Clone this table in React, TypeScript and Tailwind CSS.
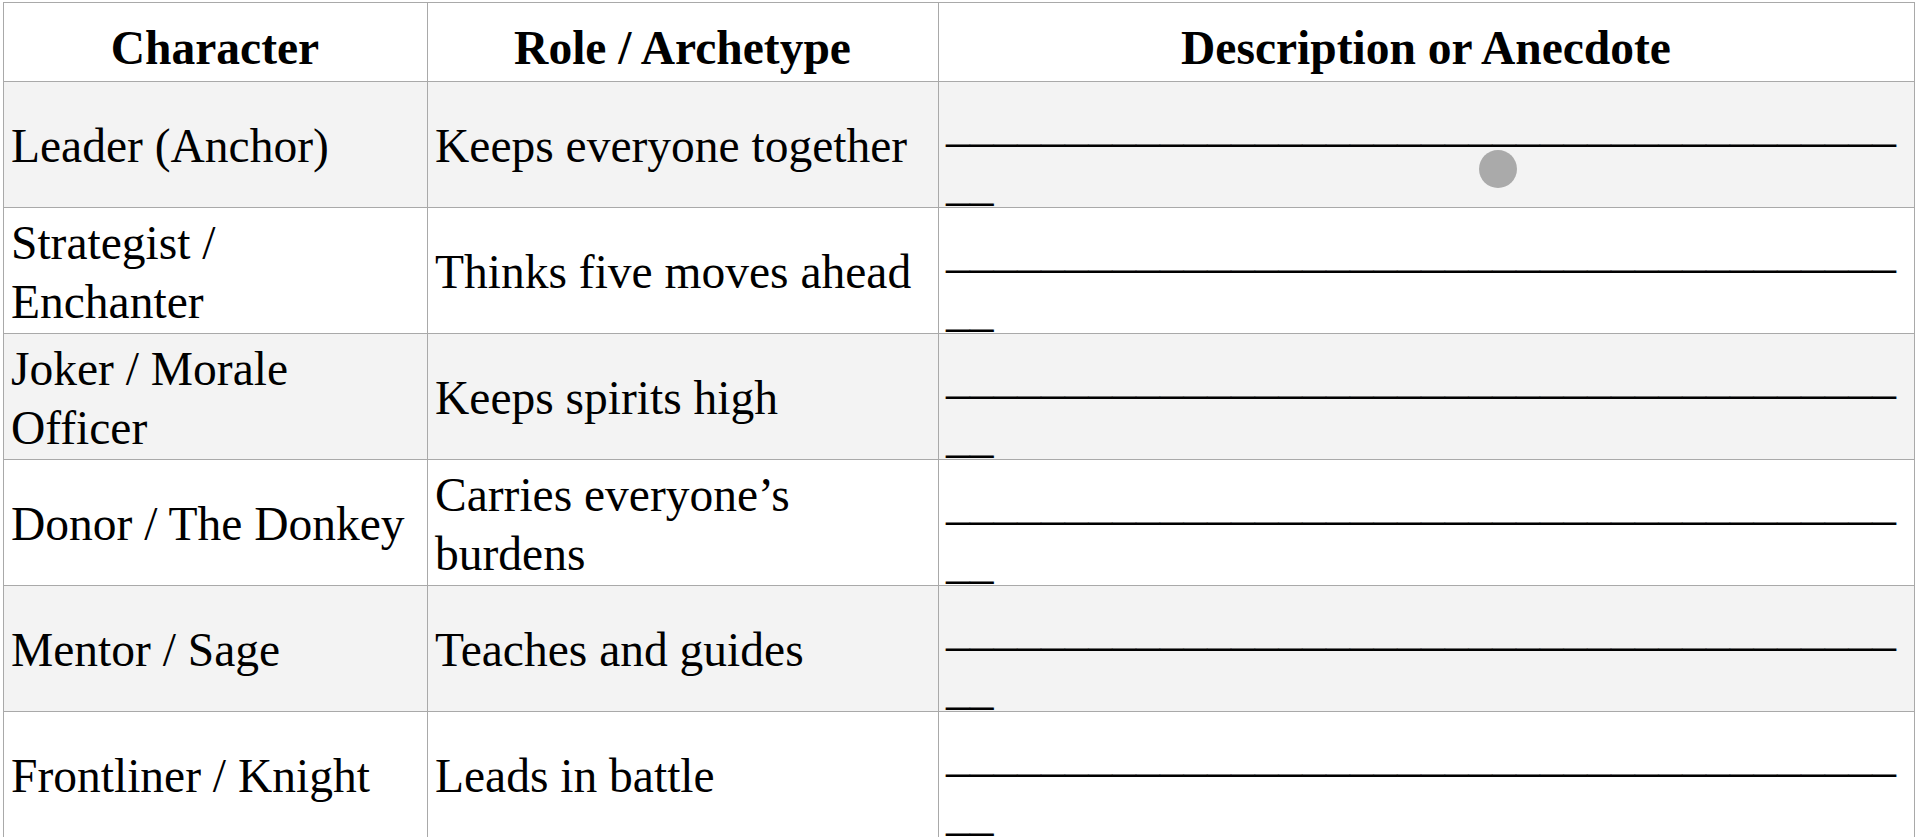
const rows = [
  { name: "Leader (Anchor)", role: "Keeps everyone together" },
  { name: "Strategist / Enchanter", role: "Thinks five moves ahead" },
  { name: "Joker / Morale Officer", role: "Keeps spirits high" },
  { name: "Donor / The Donkey", role: "Carries everyone’s burdens" },
  { name: "Mentor / Sage", role: "Teaches and guides" },
  { name: "Frontliner / Knight", role: "Leads in battle" },
];

const cell = "border border-[#a9a9a9] pl-[7px] pr-2";

const App = () => {
  return (
    <div className="relative min-h-screen bg-white pl-[3px] pt-[2px] text-black font-['Liberation_Serif','Times_New_Roman',serif]">
      <table className="table-fixed border-collapse w-[1911px] text-[47.5px] leading-[59px]">
        <colgroup>
          <col className="w-[424px]" />
          <col className="w-[511px]" />
          <col className="w-[976px]" />
        </colgroup>
        <thead>
          <tr className="h-[79px] bg-white">
            <th className={`${cell} align-middle pt-[12px] text-center font-bold`}>Character</th>
            <th className={`${cell} align-middle pt-[12px] text-center font-bold`}>Role / Archetype</th>
            <th className={`${cell} align-middle pt-[12px] text-center font-bold`}>Description or Anecdote</th>
          </tr>
        </thead>
        <tbody>
          {rows.map((r, i) => (
            <tr key={r.name} className={`h-[126px] ${i % 2 === 0 ? "bg-[#f3f3f3]" : "bg-white"}`}>
              <td className={`${cell} align-middle pt-[4px] pr-4 text-left`}>{r.name}</td>
              <td className={`${cell} align-middle pt-[4px] text-left`}>{r.role}</td>
              <td className={`${cell} align-top pt-[14px] pl-[6px] text-left whitespace-nowrap`}>
                <div className="h-[110px]">
                  <div>{"_".repeat(40)}</div>
                  <div>__</div>
                </div>
              </td>
            </tr>
          ))}
        </tbody>
      </table>
      {/* touch indicator */}
      <div className="absolute left-[1479px] top-[150px] w-[38px] h-[38px] rounded-full bg-[#aaaaaa]" />
    </div>
  );
};

export default App;
